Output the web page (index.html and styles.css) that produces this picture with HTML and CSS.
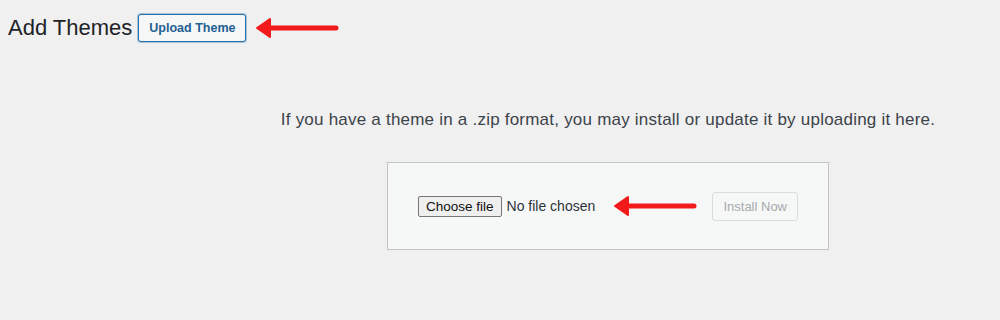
FILE: index.html
```html
<!DOCTYPE html>
<html>

<head>
  <meta charset="utf-8">
  <link rel="stylesheet" href="styles.css">
</head>

<body>
  <div class="wrap">
    <div class="page-head">
      <h1>Add Themes</h1>
      <a class="upload-btn" href="#">Upload Theme</a>
      <svg class="arrow" width="84" height="22" viewBox="0 0 84 22">
        <line x1="14" y1="11" x2="81" y2="11" stroke="#f21a1a" stroke-width="5" stroke-linecap="round" />
        <polygon points="2,11 15,2 15,20" fill="#f21a1a" stroke="#f21a1a" stroke-width="2" stroke-linejoin="round" />
      </svg>
    </div>

    <div class="upload-area">
      <p class="help">If you have a theme in a .zip format, you may install or update it by uploading it here.</p>
      <form class="upload-form">
        <div class="file-pick">
          <span class="choose-btn">Choose file</span>
          <span class="file-name">No file chosen</span>
          <svg class="arrow" width="84" height="22" viewBox="0 0 84 22">
            <line x1="14" y1="11" x2="81" y2="11" stroke="#f21a1a" stroke-width="5" stroke-linecap="round" />
            <polygon points="2,11 15,2 15,20" fill="#f21a1a" stroke="#f21a1a" stroke-width="2" stroke-linejoin="round" />
          </svg>
        </div>
        <span class="install-btn">Install Now</span>
      </form>
    </div>
  </div>
</body>

</html>
```

FILE: styles.css
```css
/* 页面基础 */
body {
  margin: 0;
  background: #f0f0f1;
  color: #3c434a;
  font-family: "Liberation Sans", Arial, sans-serif;
}

.wrap {
  padding: 0 8px;
}

/* 标题行 */
.page-head {
  display: flex;
  align-items: center;
  height: 56px;
  padding-bottom: 2px;
}

h1 {
  margin: 0;
  font-size: 22px;
  font-weight: 400;
  color: #1d2327;
}

.upload-btn {
  margin-left: 6px;
  height: 26px;
  padding: 0 10px;
  display: flex;
  align-items: center;
  border: 1px solid #2271b1;
  border-radius: 3px;
  background: #f6f7f7;
  color: #1f5f93;
  font-size: 12.5px;
  font-weight: 700;
  text-decoration: none;
  box-shadow: 0 0 0 1px rgba(34, 113, 177, 0.35);
}

.page-head .arrow {
  margin-left: 9px;
}

/* 上传区域 */
.upload-area {
  margin-left: 216px;
  display: flex;
  flex-direction: column;
  align-items: center;
  padding-top: 52px;
}

.help {
  margin: 0 0 32px 0;
  font-size: 17px;
  letter-spacing: 0.22px;
  color: #3c434a;
}

.upload-form {
  width: 442px;
  height: 88px;
  padding: 0 30px;
  box-sizing: border-box;
  border: 1px solid #c3c4c7;
  background: #f6f7f7;
  display: flex;
  align-items: center;
  justify-content: space-between;
}

.file-pick {
  display: flex;
  align-items: center;
}

.choose-btn {
  height: 19px;
  padding: 0 7px;
  display: flex;
  align-items: center;
  border: 1px solid #767676;
  border-radius: 2px;
  background: #efefef;
  color: #111;
  font-size: 13.5px;
}

.file-name {
  margin-left: 5px;
  font-size: 14px;
  color: #2c3338;
}

.file-pick .arrow {
  margin-left: 18px;
}

.install-btn {
  height: 27px;
  padding: 0 10px;
  display: flex;
  align-items: center;
  border: 1px solid #dcdcde;
  border-radius: 3px;
  background: #f6f7f7;
  color: #a7aaad;
  font-size: 13px;
}
```
